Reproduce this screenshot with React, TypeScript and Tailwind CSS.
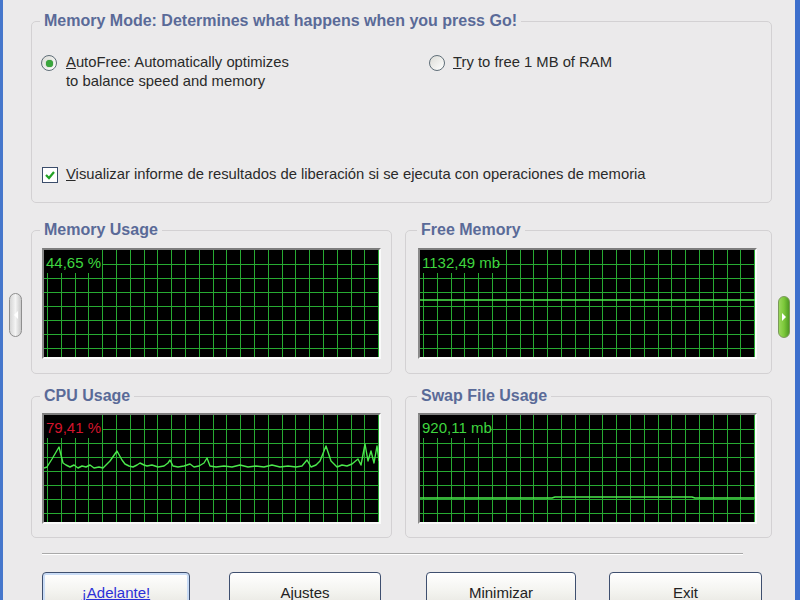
import React from 'react';

type Pt = [number, number];

const GRAPH_W = 335;
const GRAPH_H = 107;

const cpuPts: Pt[] = [
  [0, 53], [3, 52], [8, 44], [15, 32], [19, 48], [22, 50], [26, 52], [30, 50], [34, 53], [38, 51],
  [42, 52], [46, 50], [50, 53], [55, 52], [59, 53], [66, 46], [73, 36], [78, 45], [81, 49], [85, 51],
  [89, 52], [93, 50], [96, 48], [100, 50], [103, 51], [108, 50], [114, 52], [120, 51], [124, 48],
  [126, 45], [129, 51], [134, 52], [140, 51], [146, 49], [150, 52], [155, 51], [160, 48], [163, 43],
  [166, 51], [172, 52], [180, 51], [188, 52], [196, 50], [204, 52], [212, 51], [220, 52], [228, 50],
  [236, 52], [244, 51], [252, 52], [258, 51], [263, 45], [267, 52], [272, 50], [276, 46], [282, 31],
  [287, 46], [293, 52], [298, 50], [303, 51], [308, 49], [314, 44], [317, 50], [321, 29], [324, 46],
  [327, 36], [330, 48], [333, 31], [335, 46],
];

const swapPts: Pt[] = [
  [0, 83], [132, 83], [135, 82], [272, 82], [275, 83], [335, 83],
];

const freePts: Pt[] = [[0, 50], [335, 50]];

function Graph({ label, labelColor, labelW, pts }: { label: string; labelColor: string; labelW: number; pts?: Pt[] }) {
  const vLines: number[] = [];
  for (let x = 3; x < GRAPH_W; x += 13.8) vLines.push(Math.round(x) + 0.5);
  const hLines: number[] = [];
  for (let y = 14; y < GRAPH_H; y += 14) hLines.push(y + 0.5);

  return (
    <div className="w-[339px] h-[111px] border-2 border-t-[#7d7d7d] border-l-[#8a8a8a] border-b-[#fafafa] border-r-[#fafafa] bg-black">
      <svg width={GRAPH_W} height={GRAPH_H} className="block">
        {vLines.map((x) => (
          <line key={'v' + x} x1={x} y1={0} x2={x} y2={GRAPH_H} stroke="#27aa32" strokeWidth={1} />
        ))}
        {hLines.map((y) => (
          <line key={'h' + y} x1={0} y1={y} x2={GRAPH_W} y2={y} stroke="#27aa32" strokeWidth={1} />
        ))}
        <rect x={0} y={0} width={labelW} height={23} fill="#000" />
        {pts && (
          <polyline
            points={pts.map((p) => p.join(',')).join(' ')}
            fill="none"
            stroke="#4be84c"
            strokeWidth={1.4}
            strokeLinejoin="round"
          />
        )}
        <text x={2} y={18} fill={labelColor} fontSize={15} fontFamily="Liberation Sans, Arial, sans-serif">
          {label}
        </text>
      </svg>
    </div>
  );
}

function Group({ title, width, titleMl, graphMl, mb, mt, children }: {
  title: string; width: string; titleMl: string; graphMl: string; mb: string; mt: string; children: React.ReactNode;
}) {
  return (
    <fieldset className={`${width} border border-[#d3d1d3] rounded-[5px]`}>
      <legend className={`${titleMl} px-[4px] text-[16px] leading-[20px] font-bold text-[#5a6a98]`}>{title}</legend>
      <div className={`${graphMl} ${mt} ${mb}`}>{children}</div>
    </fieldset>
  );
}

function Radio({ checked }: { checked?: boolean }) {
  return (
    <span className="mt-[2px] w-[16px] h-[16px] shrink-0 rounded-full border border-[#5f6e78] bg-gradient-to-br from-[#dcdcd6] to-white flex items-center justify-center">
      {checked && <span className="w-[7px] h-[7px] rounded-full bg-[#3aa63c] shadow-[0_0_1px_#1d7a1f]" />}
    </span>
  );
}

function Button({ children, w, ml, primary }: { children: React.ReactNode; w: string; ml: string; primary?: boolean }) {
  return (
    <button
      className={`${w} ${ml} h-[40px] shrink-0 rounded-[4px] border border-[#3e4f6f] bg-gradient-to-b from-white via-[#f3f3ef] to-[#e3e2dc] text-[15px] pt-[2px] ${
        primary ? 'text-[#2b30d8] underline shadow-[inset_0_0_0_2px_#c9dcf6]' : 'text-[#222]'
      }`}
    >
      {children}
    </button>
  );
}

export default function App() {
  return (
    <div className="w-[800px] h-[600px] overflow-hidden flex bg-[#ebeaeb] border-l-[3px] border-r-[5px] border-l-[#4677cc] border-r-[#3d6fcc] font-['Liberation_Sans',Arial,sans-serif] text-[#2a2a2a]">
      {/* left side tab */}
      <div className="w-[28px] shrink-0 pt-[293px] pl-[6px]">
        <div className="w-[13px] h-[44px] rounded-full border border-[#8e8e8e] bg-gradient-to-r from-[#d6d6d6] via-[#f4f4f4] to-[#c9c9c9] flex items-center justify-center">
          <span className="w-0 h-0 border-y-[4px] border-y-transparent border-r-[4px] border-r-white" />
        </div>
      </div>

      <div className="w-[741px] shrink-0 flex flex-col pt-[11px]">
        <fieldset className="border border-[#d3d1d3] rounded-[5px]">
          <legend className="ml-[8px] px-[4px] text-[16px] leading-[20px] font-bold text-[#5a6a98]">
            Memory Mode: Determines what happens when you press Go!
          </legend>
          <div className="pl-[9px] pt-[22px] pb-[18px] text-[14.8px] leading-[19px]">
            <div className="flex">
              <div className="w-[388px] flex gap-[9px]">
                <Radio checked />
                <div>
                  <u>A</u>utoFree: Automatically optimizes
                  <br />
                  to balance speed and memory
                </div>
              </div>
              <div className="flex gap-[8px]">
                <Radio />
                <div>
                  <u>T</u>ry to free 1 MB of RAM
                </div>
              </div>
            </div>
            <div className="mt-[74px] flex items-center gap-[8px] pl-[1px]">
              <span className="w-[16px] h-[16px] border border-[#3b4d6b] bg-white flex items-center justify-center">
                <svg width="12" height="12" viewBox="0 0 12 12">
                  <path d="M2 6 L5 9 L10 3" fill="none" stroke="#22a224" strokeWidth="2.2" />
                </svg>
              </span>
              <span>
                <u>V</u>isualizar informe de resultados de liberación si se ejecuta con operaciones de memoria
              </span>
            </div>
          </div>
        </fieldset>

        <div className="flex gap-[13px] mt-[17px]">
          <Group title="Memory Usage" width="w-[361px]" titleMl="ml-[8px]" graphMl="ml-[10px]" mt="mt-[8px]" mb="mb-[14px]">
            <Graph label="44,65 %" labelColor="#3fd63f" labelW={58} />
          </Group>
          <Group title="Free Memory" width="w-[367px]" titleMl="ml-[11px]" graphMl="ml-[12px]" mt="mt-[8px]" mb="mb-[14px]">
            <Graph label="1132,49 mb" labelColor="#3fd63f" labelW={77} pts={freePts} />
          </Group>
        </div>

        <div className="flex gap-[13px] mt-[12px]">
          <Group title="CPU Usage" width="w-[361px]" titleMl="ml-[8px]" graphMl="ml-[10px]" mt="mt-[7px]" mb="mb-[13px]">
            <Graph label="79,41 %" labelColor="#d4142c" labelW={58} pts={cpuPts} />
          </Group>
          <Group title="Swap File Usage" width="w-[367px]" titleMl="ml-[11px]" graphMl="ml-[12px]" mt="mt-[7px]" mb="mb-[13px]">
            <Graph label="920,11 mb" labelColor="#3fd63f" labelW={70} pts={swapPts} />
          </Group>
        </div>

        <div className="ml-[11px] w-[701px] mt-[15px] border-t border-t-[#a9a9a9] border-b border-b-white" />

        <div className="flex mt-[17px]">
          <Button w="w-[148px]" ml="ml-[11px]" primary>¡Adelante!</Button>
          <Button w="w-[152px]" ml="ml-[39px]">Ajustes</Button>
          <Button w="w-[150px]" ml="ml-[45px]">Minimizar</Button>
          <Button w="w-[153px]" ml="ml-[33px]">Exit</Button>
        </div>
      </div>

      {/* right side tab */}
      <div className="flex-1 pt-[296px] pl-[6px]">
        <div className="w-[12px] h-[42px] rounded-full border border-[#7a9a5a] bg-gradient-to-r from-[#9ad85a] via-[#7cc83a] to-[#4f9a22] flex items-center justify-center">
          <span className="w-0 h-0 border-y-[4px] border-y-transparent border-l-[4px] border-l-white" />
        </div>
      </div>
    </div>
  );
}
